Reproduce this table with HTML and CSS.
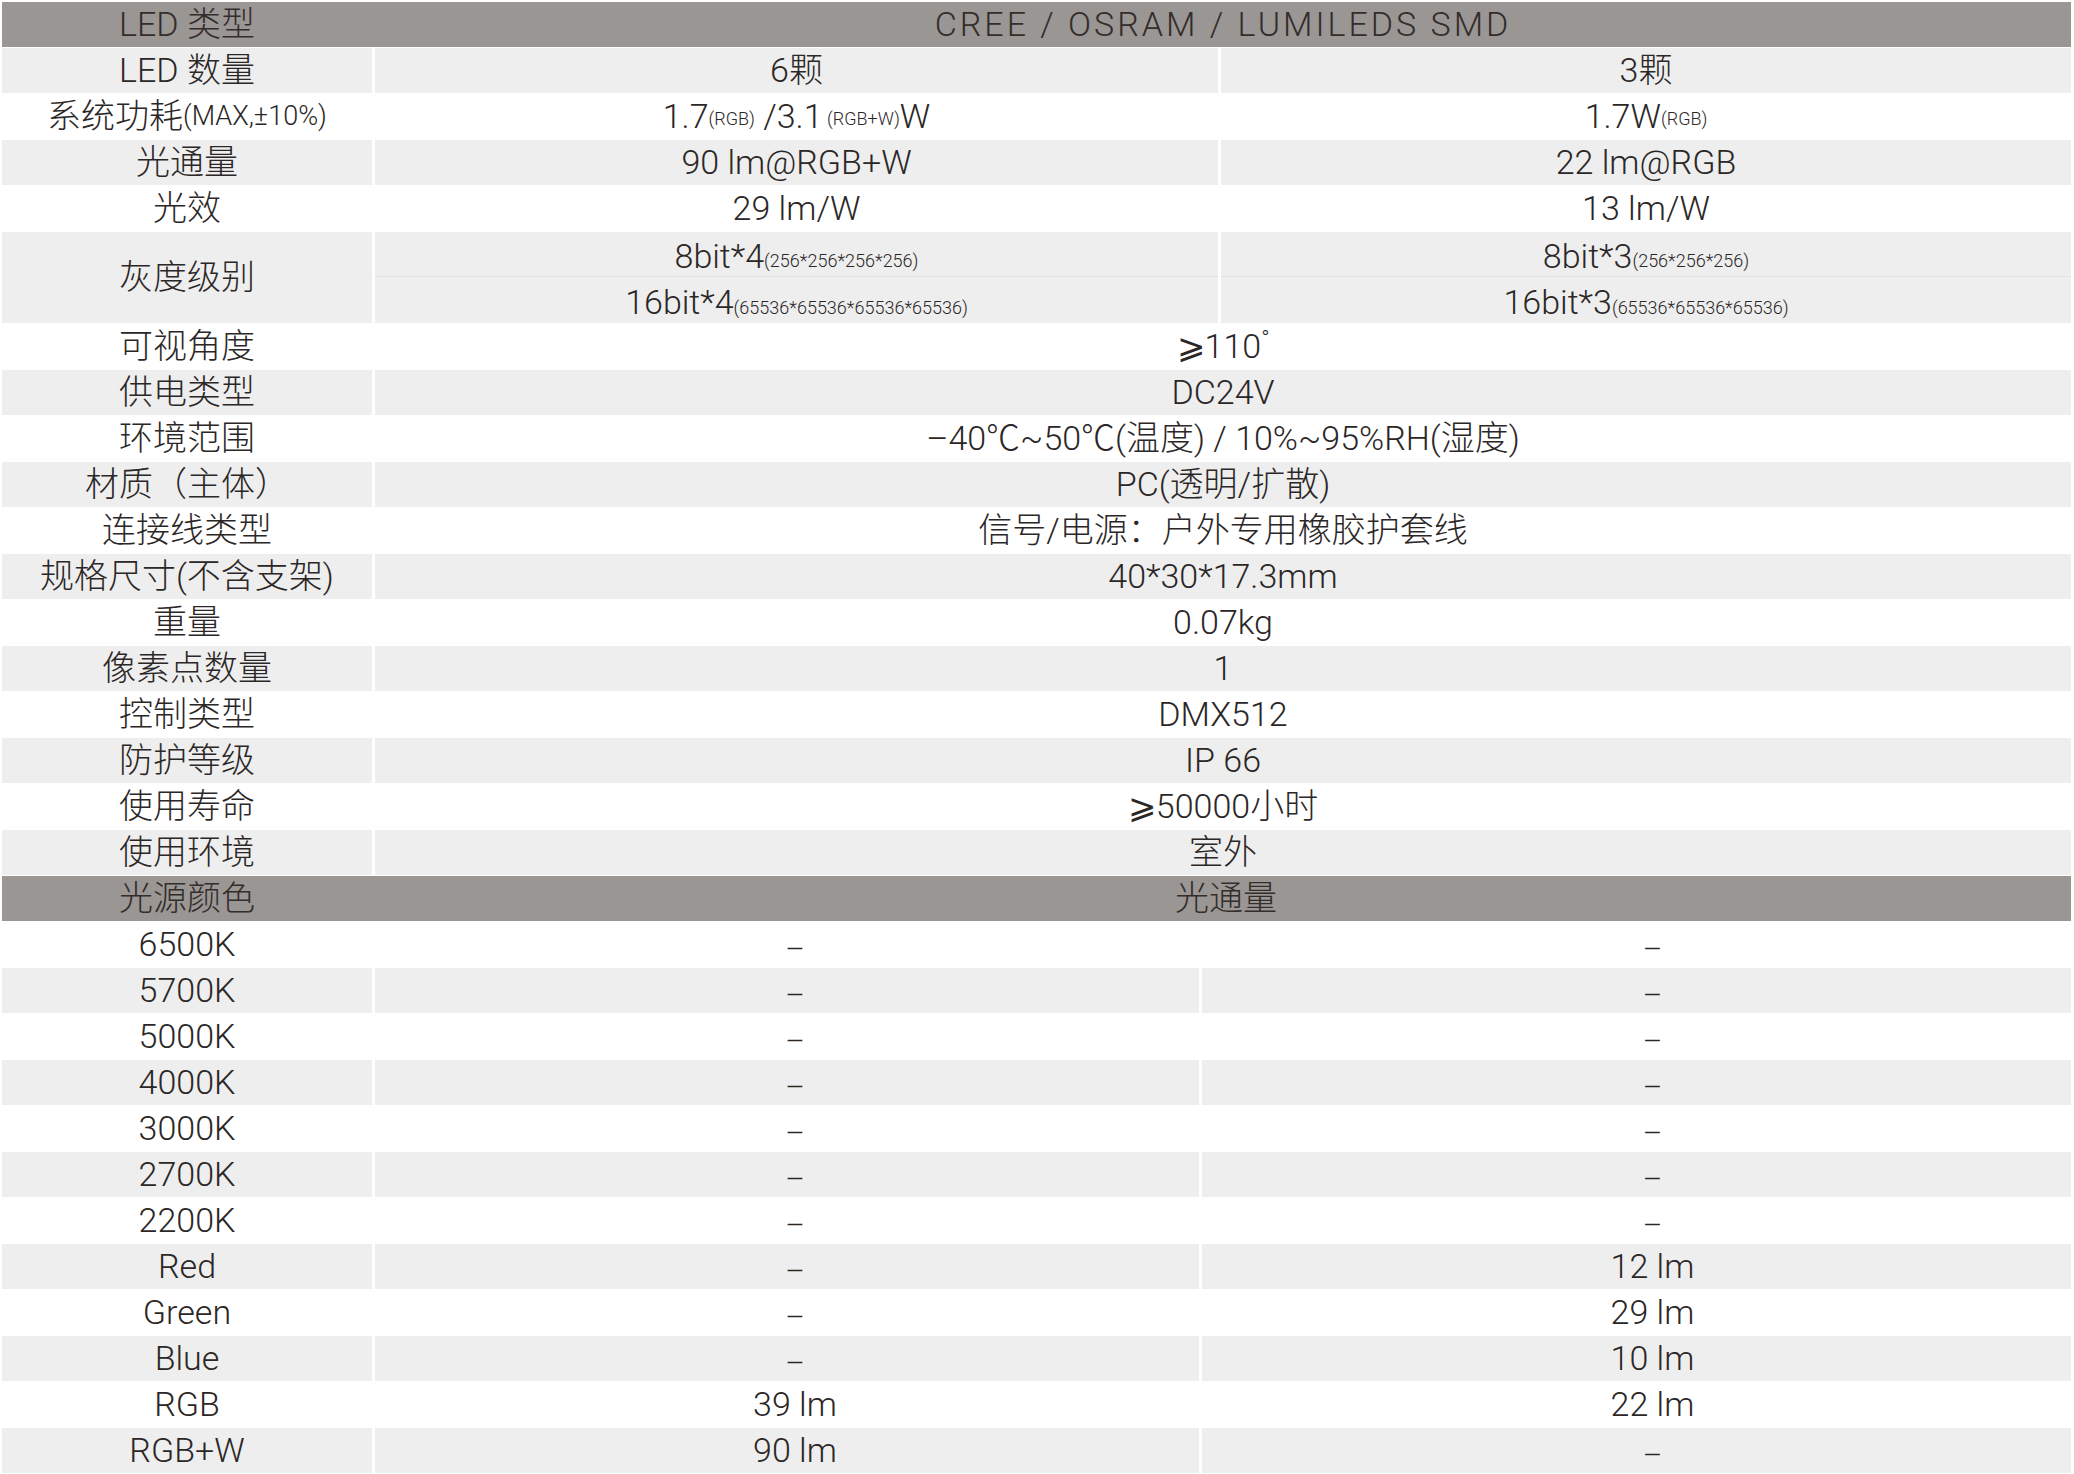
FILE: index.html
```html
<!DOCTYPE html>
<html lang="zh-CN">
<head>
<meta charset="utf-8">
<title>规格参数</title>
<link rel="stylesheet" href="styles.css">
</head>
<body>
<div class="table">
  <div class="row hd"><div class="c">LED 类型</div><div class="c wide">CREE / OSRAM / LUMILEDS SMD</div></div>
  <div class="row split g"><div class="c">LED 数量</div><div class="c">6颗</div><div class="c">3颗</div></div>
  <div class="row split"><div class="c">系统功耗<span class="lsm">(MAX,±10%)</span></div><div class="c">1.7<span class="sm">(RGB)</span>&nbsp;/3.1<span class="sm">&nbsp;(RGB+W)</span>W</div><div class="c">1.7W<span class="sm">(RGB)</span></div></div>
  <div class="row split g"><div class="c">光通量</div><div class="c">90 lm@RGB+W</div><div class="c">22 lm@RGB</div></div>
  <div class="row split"><div class="c">光效</div><div class="c">29 lm/W</div><div class="c">13 lm/W</div></div>
  <div class="row split g dbl">
    <div class="c lab">灰度级别</div>
    <div class="c sub top">8bit*4<span class="sm2">(256*256*256*256)</span></div>
    <div class="c sub top">8bit*3<span class="sm2">(256*256*256)</span></div>
    <div class="c sub">16bit*4<span class="sm2">(65536*65536*65536*65536)</span></div>
    <div class="c sub">16bit*3<span class="sm2">(65536*65536*65536)</span></div>
  </div>
  <div class="row"><div class="c">可视角度</div><div class="c">⩾110<span class="deg">°</span></div></div>
  <div class="row g"><div class="c">供电类型</div><div class="c">DC24V</div></div>
  <div class="row"><div class="c">环境范围</div><div class="c">–40℃~50℃(温度) / 10%~95%RH(湿度)</div></div>
  <div class="row g"><div class="c">材质（主体）</div><div class="c">PC(透明/扩散)</div></div>
  <div class="row"><div class="c">连接线类型</div><div class="c">信号/电源：户外专用橡胶护套线</div></div>
  <div class="row g"><div class="c">规格尺寸(不含支架)</div><div class="c">40*30*17.3mm</div></div>
  <div class="row"><div class="c">重量</div><div class="c">0.07kg</div></div>
  <div class="row g"><div class="c">像素点数量</div><div class="c">1</div></div>
  <div class="row"><div class="c">控制类型</div><div class="c">DMX512</div></div>
  <div class="row g"><div class="c">防护等级</div><div class="c">IP 66</div></div>
  <div class="row"><div class="c">使用寿命</div><div class="c">⩾50000小时</div></div>
  <div class="row g"><div class="c">使用环境</div><div class="c">室外</div></div>
  <div class="row hd"><div class="c">光源颜色</div><div class="c wide2">光通量</div></div>
  <div class="row split2"><div class="c">6500K</div><div class="c l dash">–</div><div class="c r dash">–</div></div>
  <div class="row split2 g"><div class="c">5700K</div><div class="c l dash">–</div><div class="c r dash">–</div></div>
  <div class="row split2"><div class="c">5000K</div><div class="c l dash">–</div><div class="c r dash">–</div></div>
  <div class="row split2 g"><div class="c">4000K</div><div class="c l dash">–</div><div class="c r dash">–</div></div>
  <div class="row split2"><div class="c">3000K</div><div class="c l dash">–</div><div class="c r dash">–</div></div>
  <div class="row split2 g"><div class="c">2700K</div><div class="c l dash">–</div><div class="c r dash">–</div></div>
  <div class="row split2"><div class="c">2200K</div><div class="c l dash">–</div><div class="c r dash">–</div></div>
  <div class="row split2 g"><div class="c">Red</div><div class="c l dash">–</div><div class="c r">12 lm</div></div>
  <div class="row split2"><div class="c">Green</div><div class="c l dash">–</div><div class="c r">29 lm</div></div>
  <div class="row split2 g"><div class="c">Blue</div><div class="c l dash">–</div><div class="c r">10 lm</div></div>
  <div class="row split2"><div class="c">RGB</div><div class="c l">39 lm</div><div class="c r">22 lm</div></div>
  <div class="row split2 g"><div class="c">RGB+W</div><div class="c l">90 lm</div><div class="c r dash">–</div></div>
</div>
</body>
</html>
```

FILE: styles.css
```css
html, body {
  margin: 0;
  padding: 0;
  background: #ffffff;
}
body {
  width: 2074px;
  height: 1474px;
  overflow: hidden;
  font-family: Roboto, "Noto Sans CJK SC", sans-serif;
  font-size: 34px;
  font-weight: 300;
  color: #2b2727;
}
.table {
  padding: 2px 3px 0 2px;
}
.row {
  display: grid;
  grid-template-columns: 370px 1fr;
  column-gap: 3px;
  height: 45px;
  margin-bottom: 1px;
}
.row.split {
  grid-template-columns: 370px 843px 1fr;
}
.row.split2 {
  grid-template-columns: 370px 824px 1fr;
}
.c {
  display: flex;
  align-items: center;
  justify-content: center;
  white-space: nowrap;
  line-height: 1;
  padding-bottom: 1px;
}
.row.g .c {
  background: #eeeeee;
}
.row.hd {
  background: #9a9693;
  color: #332d2b;
}
.wide {
  letter-spacing: 3px;
}
.wide2 {
  padding-left: 6px;
}
.row.dbl {
  height: 91px;
  grid-template-rows: 45px 46px;
}
.row.dbl .lab {
  grid-row: 1 / 3;
}
.row.dbl .sub {
  align-items: center;
  padding-top: 4px;
  padding-bottom: 0;
}
.row.dbl .sub.top {
  border-bottom: 1px solid #e2e2e2;
}
.lsm {
  font-size: 27px;
}
.sm {
  font-size: 18px;
  align-self: flex-end;
  padding-bottom: 10px;
}
.sm2 {
  font-size: 18px;
  align-self: flex-end;
  padding-bottom: 6px;
}
.deg {
  font-size: 22px;
  align-self: flex-start;
  padding-top: 4px;
}
.c.l {
  padding-left: 16px;
}
.c.r {
  padding-left: 32px;
}
.c.dash {
  padding-top: 10px;
  font-size: 30px;
}
```
